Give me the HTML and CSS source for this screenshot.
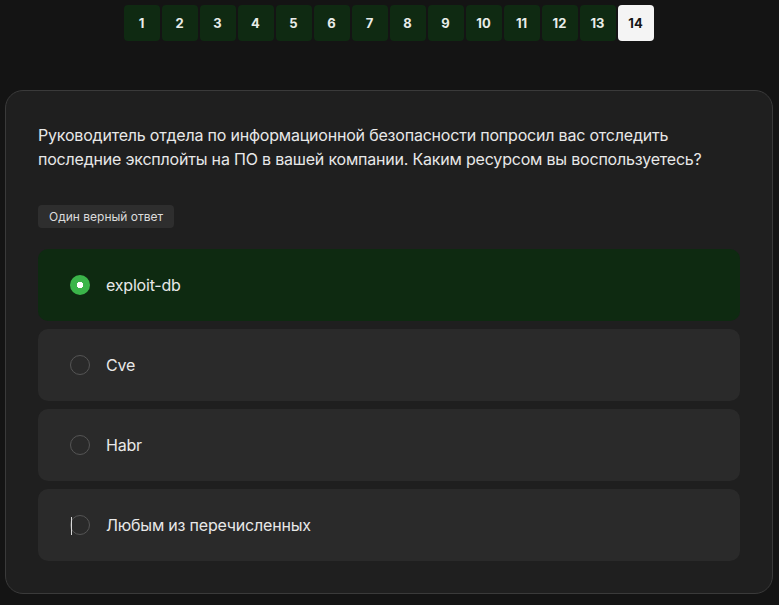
FILE: index.html
```html
<!DOCTYPE html>
<html lang="ru">
<head>
<meta charset="utf-8">
<link rel="stylesheet" href="styles.css">
</head>
<body>
<nav class="pager">
  <span class="pg">1</span><span class="pg">2</span><span class="pg">3</span><span class="pg">4</span><span class="pg">5</span><span class="pg">6</span><span class="pg">7</span><span class="pg">8</span><span class="pg">9</span><span class="pg">10</span><span class="pg">11</span><span class="pg">12</span><span class="pg">13</span><span class="pg pg-active">14</span>
</nav>
<main class="card">
  <p class="question">Руководитель отдела по информационной безопасности попросил вас отследить последние эксплойты на ПО в вашей компании. Каким ресурсом вы воспользуетесь?</p>
  <span class="tag">Один верный ответ</span>
  <div class="options">
    <div class="option option-selected"><span class="radio radio-on"></span><span class="label">exploit-db</span></div>
    <div class="option"><span class="radio"></span><span class="label">Cve</span></div>
    <div class="option"><span class="radio"></span><span class="label">Habr</span></div>
    <div class="option"><span class="radio radio-caret"></span><span class="label">Любым из перечисленных</span></div>
  </div>
</main>
</body>
</html>
```
FILE: styles.css
```css
html, body {
  margin: 0;
  background: #141414;
  font-family: Inter, "Noto Sans", sans-serif;
  color: #e6e6e6;
}
body {
  width: 779px;
  height: 605px;
  overflow: hidden;
}
.pager {
  display: flex;
  justify-content: center;
  gap: 2px;
  padding-top: 5px;
  padding-right: 2px;
}
.pg {
  width: 36px;
  height: 36px;
  border-radius: 4px;
  background: #0f2a12;
  color: #e9ece9;
  font-size: 13px;
  font-weight: 700;
  display: flex;
  align-items: center;
  justify-content: center;
}
.pg-active {
  background: #f4f4f4;
  color: #161616;
}
.card {
  margin: 49px 6px 0 5px;
  border: 1px solid #3a3a3a;
  border-radius: 18px;
  background: #1f1f1f;
  padding: 32px;
  display: flex;
  flex-direction: column;
  align-items: flex-start;
}
.question {
  margin: 0;
  font-size: 16px;
  line-height: 24px;
  letter-spacing: -0.2px;
  color: #e8e8e8;
}
.tag {
  margin-top: 34px;
  height: 23px;
  padding: 0 11px;
  display: flex;
  align-items: center;
  border-radius: 4px;
  background: #2e2e2e;
  font-size: 12px;
  color: #dcdcdc;
}
.options {
  margin-top: 21px;
  align-self: stretch;
  display: flex;
  flex-direction: column;
  gap: 8px;
}
.option {
  height: 72px;
  border-radius: 10px;
  background: #2a2a2a;
  display: flex;
  align-items: center;
  padding-left: 32px;
  gap: 16px;
}
.option-selected {
  background: #0e2a11;
}
.radio {
  position: relative;
  width: 20px;
  height: 20px;
  box-sizing: border-box;
  border-radius: 50%;
  border: 1px solid #555;
  flex: none;
}
.radio-on {
  border: none;
  background: radial-gradient(circle, #ffffff 0 3px, #3bb54a 3.5px);
}
.radio-caret::before {
  content: "";
  position: absolute;
  left: 0;
  top: 1px;
  width: 1px;
  height: 18px;
  background: #d8d8d8;
}
.label {
  font-size: 16px;
  letter-spacing: -0.2px;
  color: #e8e8e8;
}
```
